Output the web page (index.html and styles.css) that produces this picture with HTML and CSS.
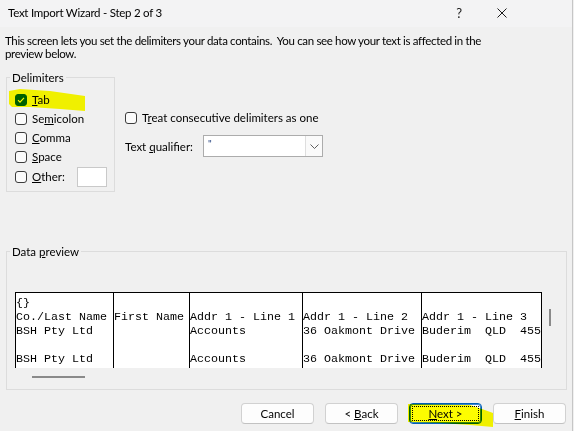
FILE: index.html
```html
<!DOCTYPE html>
<html lang="en">
<head>
<meta charset="utf-8">
<title>Text Import Wizard - Step 2 of 3</title>
<link rel="stylesheet" href="styles.css">
</head>
<body>
<div class="window">
  <header class="titlebar">
    <span class="title">Text Import Wizard - Step 2 of 3</span>
    <span class="help">?</span>
    <span class="close">
      <svg width="10" height="10" viewBox="0 0 10 10"><path d="M0.5 0.5L9.5 9.5M9.5 0.5L0.5 9.5" stroke="#1b1b1b" stroke-width="1" fill="none"/></svg>
    </span>
  </header>

  <main class="content">
    <p class="intro">This screen lets you set the delimiters your data contains.&nbsp; You can see how your text is affected in the<br>preview below.</p>

    <div class="settings">
      <fieldset class="group delimiters">
        <legend>Delimiters</legend>
        <div class="check">
          <span class="box checked"><svg width="10" height="10" viewBox="0 0 10 10"><path d="M2 5.2L4 7.2L8 2.8" stroke="#fff" stroke-width="1.1" fill="none"/></svg></span>
          <span><u>T</u>ab</span>
        </div>
        <div class="check"><span class="box"></span><span>Se<u>m</u>icolon</span></div>
        <div class="check"><span class="box"></span><span><u>C</u>omma</span></div>
        <div class="check"><span class="box"></span><span><u>S</u>pace</span></div>
        <div class="check other"><span class="box"></span><span><u>O</u>ther:</span><span class="textbox"></span></div>
      </fieldset>

      <div class="side">
        <div class="check"><span class="box"></span><span>T<u>r</u>eat consecutive delimiters as one</span></div>
        <div class="qualifier">
          <span class="qlabel">Text <u>q</u>ualifier:</span>
          <div class="combo">
            <span class="value">"</span>
            <span class="arrow"><svg width="9" height="5" viewBox="0 0 9 5"><path d="M0.5 0.5L4.5 4.5L8.5 0.5" stroke="#5f5f5f" stroke-width="1" fill="none"/></svg></span>
          </div>
        </div>
      </div>
    </div>

    <fieldset class="group preview-group">
      <legend>Data <u>p</u>review</legend>
      <div class="preview">
        <div class="sheet">
          <div class="cell">{}</div><div class="cell"></div><div class="cell"></div><div class="cell"></div><div class="cell"></div>
          <div class="cell">Co./Last Name</div><div class="cell">First Name</div><div class="cell">Addr 1 - Line 1</div><div class="cell">Addr 1 - Line 2</div><div class="cell">Addr 1 - Line 3</div>
          <div class="cell">BSH Pty Ltd</div><div class="cell"></div><div class="cell">Accounts</div><div class="cell">36 Oakmont Drive</div><div class="cell">Buderim  QLD  455</div>
          <div class="cell"></div><div class="cell"></div><div class="cell"></div><div class="cell"></div><div class="cell"></div>
          <div class="cell">BSH Pty Ltd</div><div class="cell"></div><div class="cell">Accounts</div><div class="cell">36 Oakmont Drive</div><div class="cell">Buderim  QLD  455</div>
        </div>
        <div class="vscroll"><span class="thumb"></span></div>
        <div class="hscroll"><span class="thumb"></span></div>
      </div>
    </fieldset>

    <div class="buttons">
      <button class="btn">Cancel</button>
      <button class="btn">&lt; <u>B</u>ack</button>
      <button class="btn default"><u>N</u>ext &gt;</button>
      <button class="btn"><u>F</u>inish</button>
    </div>
  </main>

  <!-- highlighter strokes drawn over the dialog -->
  <svg class="marker" width="573" height="431" viewBox="0 0 573 431">
    <polygon points="9,91 20,89 50,91 85,96 85,111 60,109 30,107 12,107 9,104" />
    <polygon points="408,404 470,405 482,409 493,413 493,427 470,425 440,423 408,422" />
  </svg>
</div>
</body>
</html>
```

FILE: styles.css
```css
* {
  box-sizing: border-box;
}

html,
body {
  margin: 0;
}

body {
  width: 574px;
  height: 431px;
  overflow: hidden;
  background: #f0f0f0;
  color: #000;
  font-family: "Lato", "Open Sans", sans-serif;
  font-size: 11.5px;
}

u {
  text-decoration: underline;
  text-underline-offset: 1px;
}

.window {
  position: relative;
  width: 573px;
  height: 431px;
  background: #f0f0f0;
  border-right: 1px solid #c6c6c6;
}

/* title bar */
.titlebar {
  height: 27px;
  display: flex;
  align-items: center;
  padding: 0 65px 2px 8px;
  background: #f3f3f4;
}

.title {
  flex: 1;
  letter-spacing: -0.25px;
}

.help {
  font-size: 13px;
  color: #1b1b1b;
  margin-right: 35px;
}

.close {
  display: flex;
}

/* body */
.intro {
  margin: 7px 0 0 5px;
  line-height: 13px;
  letter-spacing: -0.34px;
}

.settings {
  display: flex;
  align-items: flex-start;
  margin-top: 11px;
  padding-left: 6px;
}

.group {
  margin: 0;
  min-width: 0;
  border: 1px solid #dcdcdc;
}

.group legend {
  margin-left: -5px;
  padding: 0 2px;
  line-height: 13px;
}

.delimiters {
  width: 109px;
  padding: 6px 7px 4px 8px;
}

.check {
  display: flex;
  align-items: center;
  gap: 5px;
  height: 19px;
  white-space: nowrap;
}

.box {
  flex: none;
  width: 12px;
  height: 12px;
  border: 1px solid #3c3c3c;
  border-radius: 3px;
  background: #fbfbfb;
}

.box.checked {
  display: flex;
  align-items: center;
  justify-content: center;
  background: #005fb8;
  border-color: #005fb8;
}

.other {
  height: 21px;
}

.textbox {
  margin-left: auto;
  width: 30px;
  height: 20px;
  background: #fff;
  border: 1px solid #c9c9c9;
}

.side {
  margin-left: 10px;
  padding-top: 37px;
}

.qualifier {
  display: flex;
  align-items: center;
  margin-top: 8px;
}

.qlabel {
  width: 78px;
}

.combo {
  display: flex;
  width: 120px;
  height: 22px;
  background: #fff;
  border: 1px solid #acacac;
}

.combo .value {
  flex: 1;
  padding: 2px 0 0 4px;
  font-size: 10px;
  line-height: 10px;
  color: #1c3a7a;
}

.combo .arrow {
  display: flex;
  align-items: center;
  justify-content: center;
  width: 17px;
  border-left: 1px solid #dedede;
  background: #fafafa;
}

/* data preview */
.preview-group {
  width: 561px;
  margin: 53px 0 0 6px;
  padding: 34px 0 9px 8px;
}

.preview {
  display: grid;
  grid-template-columns: 527px 15px;
  grid-template-rows: 76px 12px;
}

.sheet {
  display: grid;
  grid-template-columns: 98px 76px 113px 119px 121px;
  grid-template-rows: 17px 14px 14px 14px 1fr;
  overflow: hidden;
  background: #fff;
  border-top: 1px solid #000;
  font-family: "Liberation Mono", "Courier New", monospace;
  font-size: 11.67px;
  line-height: 14px;
}

.cell {
  border-left: 1px solid #000;
  white-space: pre;
  overflow: hidden;
}

.cell:nth-child(-n+5) {
  padding-top: 3px;
}

.cell:nth-child(5n) {
  border-right: 1px solid #000;
}

.vscroll {
  padding: 17px 0 0 7px;
}

.vscroll .thumb {
  display: block;
  width: 2px;
  height: 17px;
  background: #8a8a8a;
}

.hscroll {
  padding: 8px 0 0 17px;
}

.hscroll .thumb {
  display: block;
  width: 53px;
  height: 2px;
  background: #8a8a8a;
}

/* dialog buttons */
.buttons {
  display: flex;
  justify-content: flex-end;
  gap: 11px;
  margin-top: 13px;
  padding-right: 6px;
}

.btn {
  width: 73px;
  height: 21px;
  padding: 0;
  font: inherit;
  color: #000;
  background: #fdfdfd;
  border: 1px solid #d1d1d1;
  border-bottom-color: #c2c2c2;
  border-radius: 4px;
}

.btn.default {
  border-color: #005fb8;
  box-shadow: inset 0 0 0 1px #3d86cf;
  outline: 1px dotted #000;
  outline-offset: -4px;
}

/* highlighter */
.marker {
  position: absolute;
  left: 0;
  top: 0;
  pointer-events: none;
  mix-blend-mode: multiply;
}

.marker polygon {
  fill: #ffff00;
}
```
